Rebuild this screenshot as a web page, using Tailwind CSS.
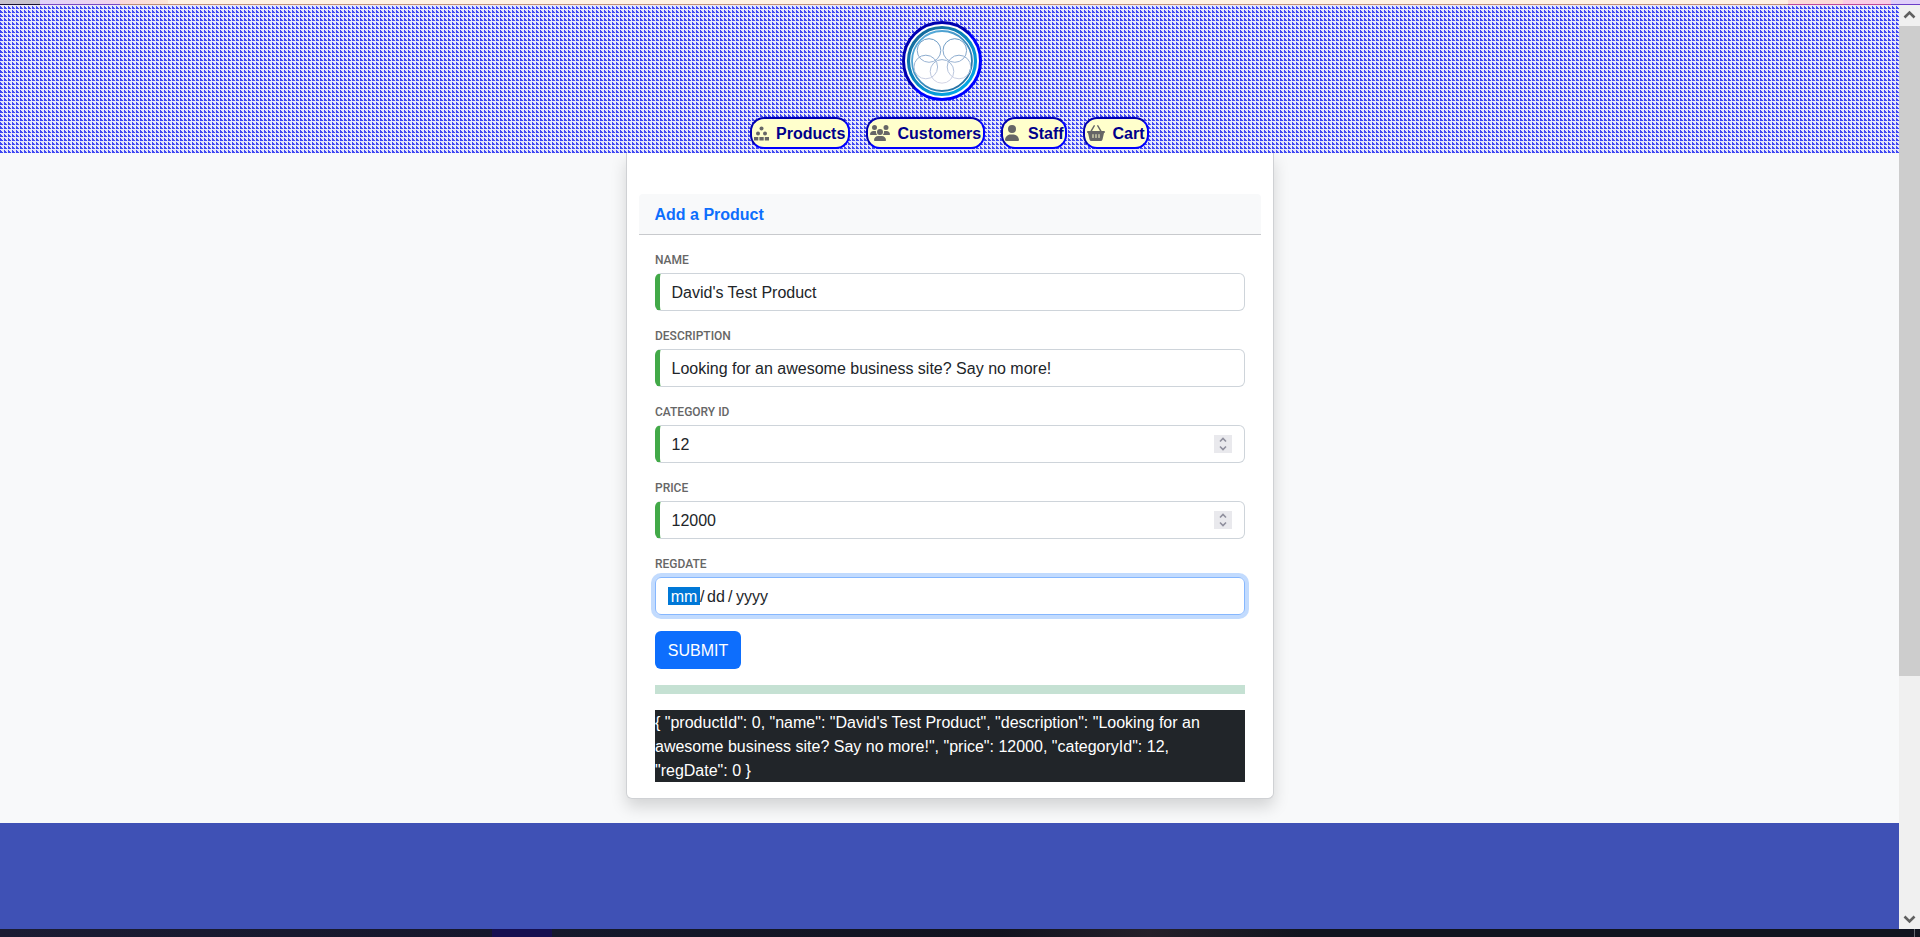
<!DOCTYPE html>
<html lang="en">
<head>
<meta charset="utf-8">
<title>Add a Product</title>
<script src="https://cdn.jsdelivr.net/npm/@tailwindcss/browser@4"></script>
</head>
<body class="h-[937px] w-[1920px] overflow-hidden flex flex-col bg-[#f8f9fa] font-['Liberation_Sans',Arial,sans-serif] text-base text-[#212529]">
  <div class="h-[5px] shrink-0 flex flex-col">
    <div class="h-1 flex bg-[#fff1e4]">
      <div class="w-10 bg-[#c8c2cd]"></div>
      <div class="w-20 bg-gradient-to-r from-[#e0d2fa] to-[#f3d5ec]"></div>
      <div class="w-12 bg-gradient-to-r from-[#fcd8dc] to-[#fde6d8]"></div>
      <div class="grow"></div>
      <div class="w-[55px] bg-[#fddcd8]"></div>
      <div class="w-12 bg-[#fbcde6]"></div>
      <div class="w-[29px] bg-[#e0cffa]"></div>
    </div>
    <div class="h-px flex bg-[#c08f78]">
      <div class="w-10 bg-[#1a1030]"></div>
      <div class="w-20 bg-[#7a48c0]"></div>
      <div class="grow"></div>
      <div class="w-[103px] bg-[#c04898]"></div>
      <div class="w-[29px] bg-[#6a3ec8]"></div>
    </div>
  </div>

  <div class="h-[924px] shrink-0 flex">
    <main class="w-[1899px] flex flex-col">
      <header class="relative h-[148px] shrink-0 flex flex-col items-center">
        <svg class="absolute inset-0 -z-10" width="1899" height="148" shape-rendering="crispEdges">
          <defs>
            <pattern id="steps" width="4" height="4" patternUnits="userSpaceOnUse">
              <rect width="4" height="4" fill="#e6e6fa"/>
              <path d="M0 1h1v1h1v1h1v1H0z" fill="#3f48f3"/>
            </pattern>
          </defs>
          <rect width="1899" height="148" fill="url(#steps)"/>
        </svg>
        <svg class="mt-[16px] mr-[15px] size-20 shrink-0" viewBox="0 0 80 80" fill="none">
          <defs>
            <linearGradient id="rim" x1="0" y1="0" x2="1" y2="1"><stop offset=".49" stop-color="#0000b0"/><stop offset=".51" stop-color="#0000ff"/></linearGradient>
            <linearGradient id="ring" x1="0" y1="0" x2=".8" y2="1"><stop offset="0" stop-color="#17618f"/><stop offset="1" stop-color="#00a9ea"/></linearGradient>
            <linearGradient id="ring2" x1="0" y1="0" x2="1" y2="1"><stop offset="0" stop-color="#5fb7e6"/><stop offset="1" stop-color="#1c6698"/></linearGradient>
            <linearGradient id="loops" x1="0" y1="12" x2="0" y2="64" gradientUnits="userSpaceOnUse"><stop offset="0" stop-color="#5992bf"/><stop offset=".5" stop-color="#93afd0"/><stop offset="1" stop-color="#dbd9e8"/></linearGradient>
          </defs>
          <circle cx="40" cy="40" r="38.500" fill="#fff" stroke="url(#rim)" stroke-width="3"/>
          <circle cx="40" cy="40" r="33.500" stroke="url(#ring)" stroke-width="3.2"/>
          <circle cx="40" cy="40" r="30" stroke="url(#ring2)" stroke-width="1.8"/>
          <g stroke="url(#loops)" stroke-width="1">
            <circle cx="27" cy="29.500" r="11.8"/><circle cx="52.8" cy="29.500" r="11.8"/>
            <circle cx="23.8" cy="46" r="11.8"/><circle cx="57" cy="46" r="11.8"/>
            <circle cx="40" cy="50.4" r="11.8"/>
          </g>
        </svg>
        <nav class="mt-[16px] flex gap-4 font-bold text-[#00008b] text-base leading-7">
          <a class="w-[100px] h-8 flex items-center pl-[2px] rounded-[14px] border-2 border-t-[#0000b0] border-l-[#0000b0] border-r-[#0000ff] border-b-[#0000ff] bg-[#ffffcc]">
            <svg class="w-[15px] h-[15px] mr-[7px]" viewBox="0 0 15 15" fill="#666"><circle cx="7.500" cy="2.500" r="2"/><circle cx="4" cy="7.500" r="2"/><circle cx="11" cy="7.500" r="2"/><path d="M0 14.500v-3.500h4.300v3.500zM5.400 14.500v-3.500h4.300v3.500zM10.800 14.500v-3.500H15v3.500z"/></svg><span class="pt-0.5">Products</span></a>
          <a class="w-[119px] h-8 flex items-center pl-[2px] rounded-[14px] border-2 border-t-[#0000b0] border-l-[#0000b0] border-r-[#0000ff] border-b-[#0000ff] bg-[#ffffcc]">
            <svg class="w-5 h-4 mr-[7.5px]" viewBox="0 0 640 512" fill="#666"><path d="M144 0a80 80 0 1 1 0 160A80 80 0 1 1 144 0zM512 0a80 80 0 1 1 0 160A80 80 0 1 1 512 0zM0 298.700C0 239.800 47.800 192 106.700 192h42.700c15.900 0 31 3.500 44.600 9.700c-1.300 7.200-1.900 14.700-1.900 22.300c0 38.200 16.800 72.500 43.300 96H21.300C9.600 320 0 310.400 0 298.700zM405.300 320h-.7c26.600-23.500 43.300-57.800 43.300-96c0-7.600-.7-15-1.900-22.300c13.600-6.300 28.700-9.700 44.600-9.700h42.700C592.200 192 640 239.800 640 298.700c0 11.800-9.600 21.300-21.300 21.300H405.300zM224 224a96 96 0 1 1 192 0a96 96 0 1 1-192 0zM128 485.300C128 411.700 187.700 352 261.300 352h117.400C452.300 352 512 411.700 512 485.300c0 14.700-11.900 26.700-26.700 26.700H154.700c-14.700 0-26.700-11.900-26.700-26.700z"/></svg><span class="pt-0.5">Customers</span></a>
          <a class="w-[66px] h-8 flex items-center pl-[2px] rounded-[14px] border-2 border-t-[#0000b0] border-l-[#0000b0] border-r-[#0000ff] border-b-[#0000ff] bg-[#ffffcc]">
            <svg class="w-[14px] h-4 mr-[9px]" viewBox="0 0 448 512" fill="#666"><path d="M224 256A128 128 0 1 0 224 0a128 128 0 1 0 0 256zM178.300 304C79.800 304 0 383.800 0 482.300C0 498.700 13.300 512 29.700 512h388.600c16.400 0 29.700-13.300 29.700-29.700C448 383.800 368.200 304 269.700 304z"/></svg><span class="pt-0.5">Staff</span></a>
          <a class="w-[66px] h-8 flex items-center pl-[2px] rounded-[14px] border-2 border-t-[#0000b0] border-l-[#0000b0] border-r-[#0000ff] border-b-[#0000ff] bg-[#ffffcc]">
            <svg class="w-[18px] h-4 mr-[7.5px]" viewBox="0 0 576 512" fill="#666"><path fill-rule="evenodd" d="M253 35a24 24 0 0 0-42-22L107 192H32a32 32 0 0 0 0 64l48 207a64 64 0 0 0 62 49h292a64 64 0 0 0 62-49l48-207a32 32 0 0 0 0-64h-75L365 13a24 24 0 0 0-42 22l92 157H161zM176 304v96a16 16 0 0 0 32 0v-96a16 16 0 0 0-32 0zM272 304v96a16 16 0 0 0 32 0v-96a16 16 0 0 0-32 0zM368 304v96a16 16 0 0 0 32 0v-96a16 16 0 0 0-32 0z"/></svg><span class="pt-0.5">Cart</span></a>
        </nav>
      </header>

      <section class="h-[670px] shrink-0 overflow-hidden flex flex-col items-center">
        <div class="ml-px w-[648px] h-[646px] px-3 pt-[41px] border border-t-0 border-[#cfd1d4] rounded-b-md bg-white shadow-[0_8px_16px_rgba(0,0,0,0.15)]">
          <div class="h-[41px] px-[15.5px] pt-[9px] rounded-t border-b border-[#c8cacd] bg-[#f8f9fa] font-bold leading-6 text-[#0d6efd]">Add a Product</div>
          <form class="px-4 pt-4 flex flex-col">
            <label class="mb-1 h-[18px] font-[Roboto,sans-serif] text-xs leading-[18px] font-medium text-[#666]">NAME</label>
            <div class="mb-4 h-[38px] flex items-center pl-[11.5px] pr-3 rounded-md border border-l-[5px] border-[#ced4da] border-l-[#42a948] leading-6"><span class="pt-0.5">David's Test Product</span></div>
            <label class="mb-1 h-[18px] font-[Roboto,sans-serif] text-xs leading-[18px] font-medium text-[#666]">DESCRIPTION</label>
            <div class="mb-4 h-[38px] flex items-center pl-[11.5px] pr-3 rounded-md border border-l-[5px] border-[#ced4da] border-l-[#42a948] leading-6"><span class="pt-0.5">Looking for an awesome business site? Say no more!</span></div>
            <label class="mb-1 h-[18px] font-[Roboto,sans-serif] text-xs leading-[18px] font-medium text-[#666]">CATEGORY ID</label>
            <div class="mb-4 h-[38px] flex items-center justify-between pl-[11.5px] pr-3 rounded-md border border-l-[5px] border-[#ced4da] border-l-[#42a948] leading-6"><span class="pt-0.5">12</span>
              <svg class="w-[18px] h-[18px] bg-[#e9e9ed]" viewBox="0 0 18 18" fill="none" stroke="#8f8f9d" stroke-width="1.6"><path d="M6 6.500l3-3 3 3M6 11.500l3 3 3-3"/></svg></div>
            <label class="mb-1 h-[18px] font-[Roboto,sans-serif] text-xs leading-[18px] font-medium text-[#666]">PRICE</label>
            <div class="mb-4 h-[38px] flex items-center justify-between pl-[11.5px] pr-3 rounded-md border border-l-[5px] border-[#ced4da] border-l-[#42a948] leading-6"><span class="pt-0.5">12000</span>
              <svg class="w-[18px] h-[18px] bg-[#e9e9ed]" viewBox="0 0 18 18" fill="none" stroke="#8f8f9d" stroke-width="1.6"><path d="M6 6.500l3-3 3 3M6 11.500l3 3 3-3"/></svg></div>
            <label class="mb-1 h-[18px] font-[Roboto,sans-serif] text-xs leading-[18px] font-medium text-[#666]">REGDATE</label>
            <div class="mb-4 h-[38px] flex items-center pl-3 rounded-md border border-[#86b7fe] shadow-[0_0_0_4px_rgba(13,110,253,0.25)] leading-5"><span class="w-8 h-[18px] text-center bg-[#0078d7] text-white">mm</span><span class="w-[7px] h-[18px]">/</span><span class="w-[21px] h-[18px]">dd</span><span class="w-2 h-[18px]">/</span><span class="h-[18px]">yyyy</span></div>
            <button type="button" class="mb-4 w-[86px] h-[38px] pt-0.5 rounded-md bg-[#0d6efd] text-white">SUBMIT</button>
            <div class="mb-4 h-[9px] bg-[#c5e1d3]"></div>
            <div class="h-[72px] pt-px leading-6 bg-[#212529] text-white whitespace-nowrap">{ "productId": 0, "name": "David's Test Product", "description": "Looking for an<br>awesome business site? Say no more!", "price": 12000, "categoryId": 12,<br>"regDate": 0 }</div>
          </form>
        </div>
      </section>
      <footer class="grow bg-[#3f51b5]"></footer>
    </main>
    <aside class="w-[21px] flex flex-col items-center bg-[#f0f0f0]">
      <svg class="h-[21px] w-[21px] shrink-0" viewBox="0 0 21 21" fill="none" stroke="#606060" stroke-width="2.6"><path d="M5.500 12.500l5-5 5 5"/></svg>
      <div class="w-full h-[650px] shrink-0 bg-[#cdcdcd]"></div>
      <div class="grow"></div>
      <svg class="h-[21px] w-[21px] shrink-0" viewBox="0 0 21 21" fill="none" stroke="#606060" stroke-width="2.600"><path d="M5.500 8.500l5 5 5-5"/></svg>
    </aside>
  </div>

  <div class="h-2 shrink-0 flex bg-[#141722]">
    <div class="w-[492px] bg-gradient-to-r from-[#1b1c33] to-[#16172c]"></div>
    <div class="w-[60px] bg-[#160f50]"></div>
    <div class="w-[448px] bg-gradient-to-r from-[#15192c] to-[#12131f]"></div>
    <div class="w-[150px] bg-gradient-to-r from-[#12131f] to-[#25202a]"></div>
    <div class="w-[150px] bg-gradient-to-r from-[#25202a] to-[#12151f]"></div>
    <div class="grow bg-[#11141f]"></div>
    <div class="w-px bg-[#686b73]"></div>
    <div class="w-[5px] bg-[#11141f]"></div>
  </div>
</body>
</html>
